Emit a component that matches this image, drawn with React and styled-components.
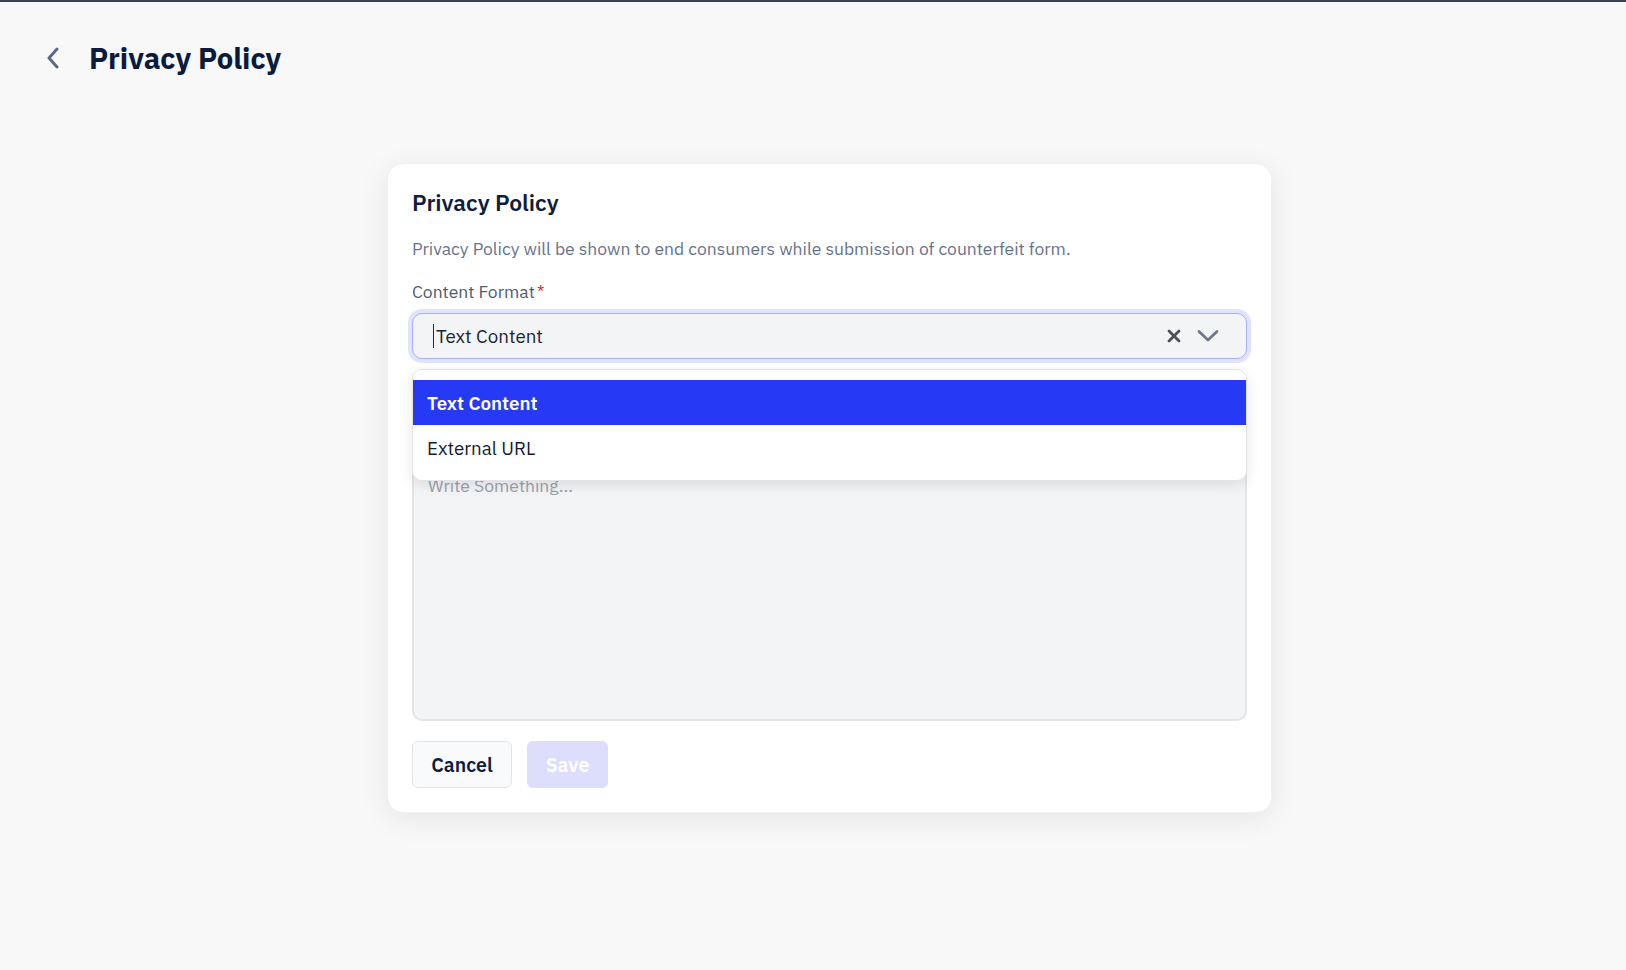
import React from "react";
import styled, { createGlobalStyle } from "styled-components";
import { Bold, Italic, Underline, List, ListOrdered, Link } from "lucide-react";

const Global = createGlobalStyle`
  html, body { margin: 0; padding: 0; }
  body {
    background: #f8f8f8;
    font-family: "IBM Plex Sans", Roboto, "Noto Sans", sans-serif;
    color: #0f1d40;
  }
  * { box-sizing: border-box; }
`;

const Page = styled.div`
  min-height: 970px;
  border-top: 2px solid #3a4150;
`;

const Header = styled.header`
  display: flex;
  align-items: flex-start;
  gap: 28px;
  padding: 36px 0 0 45px;
  height: 118px;
`;

const BackButton = styled.button`
  display: flex;
  align-items: center;
  justify-content: center;
  width: 16px;
  height: 40px;
  padding: 0;
  border: none;
  background: none;
  color: #5b6a84;
  cursor: pointer;
`;

const PageTitle = styled.h1`
  margin: 0;
  font-size: 29.3px;
  line-height: 40px;
  font-weight: 700;
  color: #0c1b3d;
`;

const Content = styled.main`
  padding: 43px 0 0 33px;
`;

const Card = styled.section`
  width: 885px;
  margin: 0 auto;
  background: #ffffff;
  border: 1px solid #f0f0f0;
  border-radius: 16px;
  box-shadow: 0 6px 30px rgba(0, 0, 0, 0.08);
  padding: 25px 24px 24px;
  display: flex;
  flex-direction: column;
`;

const CardTitle = styled.h2`
  margin: 0;
  font-size: 22.8px;
  line-height: 28px;
  font-weight: 600;
  color: #0f1d40;
`;

const Description = styled.p`
  margin: 20px 0 0;
  font-size: 17.5px;
  line-height: 24px;
  color: #66748a;
`;

const Field = styled.div`
  margin-top: 19px;
  display: flex;
  flex-direction: column;
  gap: 9px;
`;

const Label = styled.label`
  font-size: 17.5px;
  line-height: 24px;
  color: #4e5b70;
`;

const Req = styled.span`
  color: #ef2b2b;
  margin-left: 2px;
`;

const SelectWrap = styled.div`
  position: relative;
`;

const SelectBox = styled.div`
  height: 46px;
  display: flex;
  align-items: center;
  padding: 0 27px 0 20px;
  background: #f3f4f6;
  border: 1px solid #a9b0fb;
  border-radius: 10px;
  box-shadow: 0 0 0 4px #e1e3fd;
`;

const Caret = styled.span`
  width: 1px;
  height: 24px;
  background: #1f2937;
  margin-right: 2px;
`;

const SelectValue = styled.span`
  flex: 1;
  font-size: 18.75px;
  color: #1b2435;
`;

const IconBtn = styled.span`
  display: flex;
  align-items: center;
  justify-content: center;
  color: ${(p) => p.$color};
  margin-left: ${(p) => p.$ml}px;
`;

const Menu = styled.ul`
  position: absolute;
  z-index: 5;
  left: 0;
  right: 0;
  top: calc(100% + 10px);
  margin: 0;
  padding: 10px 0 10px;
  list-style: none;
  background: #ffffff;
  border: 1px solid #e3e4e8;
  border-radius: 10px;
  box-shadow: 0 4px 14px rgba(0, 0, 0, 0.1);
  overflow: hidden;
`;

const Option = styled.li`
  height: 45px;
  display: flex;
  align-items: center;
  padding: 0 14px;
  font-size: 18.75px;
  font-weight: ${(p) => (p.$active ? 600 : 400)};
  color: ${(p) => (p.$active ? "#ffffff" : "#141c2c")};
  background: ${(p) => (p.$active ? "#2639f5" : "transparent")};
`;

const Editor = styled.div`
  margin-top: 49px;
  height: 313px;
  display: flex;
  flex-direction: column;
  background: #f3f4f6;
  border: 2px solid #e3e5e9;
  border-radius: 10px;
  overflow: hidden;
`;

const Toolbar = styled.div`
  height: 50px;
  flex-shrink: 0;
  border-bottom: 1px solid #e3e5e9;
  display: flex;
  align-items: center;
  gap: 16px;
  padding: 0 14px;
  color: #4b5563;
`;

const Placeholder = styled.div`
  padding: 14px 14px;
  font-size: 17.5px;
  line-height: 24px;
  color: #9aa1ad;
`;

const Actions = styled.div`
  margin-top: 20px;
  display: flex;
  gap: 15px;
`;

const Button = styled.button`
  height: 47px;
  width: ${(p) => p.$w}px;
  padding: 0;
  border-radius: 6px;
  font-family: inherit;
  font-size: 19.5px;
  font-weight: 600;
  border: 1px solid ${(p) => (p.$primary ? "#dcdefc" : "#e2e5e8")};
  background: ${(p) => (p.$primary ? "#dcdefc" : "#f8fafb")};
  color: ${(p) => (p.$primary ? "#ffffff" : "#0f1d40")};
  cursor: pointer;
`;

export default function App() {
  return (
    <>
      <Global />
      <Page>
        <Header>
          <BackButton aria-label="Back">
            <svg width="14" height="22" viewBox="0 0 14 22" fill="none">
              <path d="M11 2 L3 11 L11 20" stroke="currentColor" strokeWidth="3" strokeLinecap="round" strokeLinejoin="round" />
            </svg>
          </BackButton>
          <PageTitle>Privacy Policy</PageTitle>
        </Header>
        <Content>
          <Card>
            <CardTitle>Privacy Policy</CardTitle>
            <Description>
              Privacy Policy will be shown to end consumers while submission of counterfeit form.
            </Description>
            <Field>
              <Label>
                Content Format<Req>*</Req>
              </Label>
              <SelectWrap>
                <SelectBox>
                  <Caret />
                  <SelectValue>Text Content</SelectValue>
                  <IconBtn $color="#4a4f58" $ml={0}>
                    <svg width="14" height="14" viewBox="0 0 14 14">
                      <path d="M2 2 L12 12 M12 2 L2 12" stroke="currentColor" strokeWidth="2.8" strokeLinecap="round" />
                    </svg>
                  </IconBtn>
                  <IconBtn $color="#6f7785" $ml={16}>
                    <svg width="22" height="14" viewBox="0 0 22 14">
                      <path d="M2 2.5 L11 11 L20 2.5" stroke="currentColor" strokeWidth="2.8" strokeLinecap="round" strokeLinejoin="round" fill="none" />
                    </svg>
                  </IconBtn>
                </SelectBox>
                <Menu>
                  <Option $active>Text Content</Option>
                  <Option>External URL</Option>
                </Menu>
              </SelectWrap>
            </Field>
            <Editor>
              <Toolbar>
                <Bold size={18} />
                <Italic size={18} />
                <Underline size={18} />
                <List size={18} />
                <ListOrdered size={18} />
                <Link size={18} />
              </Toolbar>
              <Placeholder>Write Something...</Placeholder>
            </Editor>
            <Actions>
              <Button $w={100}>Cancel</Button>
              <Button $primary $w={81}>Save</Button>
            </Actions>
          </Card>
        </Content>
      </Page>
    </>
  );
}
